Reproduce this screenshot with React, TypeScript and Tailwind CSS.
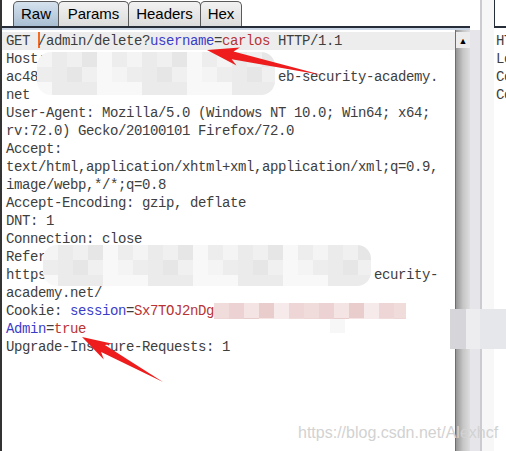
import type { ReactNode } from 'react';

const GRAYS = ['#f4f4f4', '#ebebeb', '#f0f0f0', '#e6e6e6', '#f8f8f8', '#ededed'];
const PINKS = ['#f1dcdc', '#ecd2d2', '#f4e4e4', '#e9cccc', '#f6eaea', '#eed6d6'];

interface MosaicProps {
  id: string;
  left: number;
  top: number;
  width: number;
  height: number;
  cell: number;
  palette: string[];
  radius?: number;
}

/**
 * モザイク（ぼかし）部分
 */
function Mosaic({ id, left, top, width, height, cell, palette, radius = 0 }: MosaicProps) {
  const cols = Math.ceil(width / cell);
  const rows = Math.ceil(height / cell);
  const cells: ReactNode[] = [];
  for (let r = 0; r < rows; r++) {
    for (let c = 0; c < cols; c++) {
      const shade = palette[(c * 7 + r * 5 + ((c * r) % 3)) % palette.length];
      cells.push(<rect key={`${r}-${c}`} x={c * cell} y={r * cell} width={cell} height={cell} fill={shade} />);
    }
  }
  return (
    <svg
      className="absolute pointer-events-none"
      style={{ left, top }}
      width={width}
      height={height}
      viewBox={`0 0 ${width} ${height}`}
    >
      <defs>
        <clipPath id={id}>
          <rect x={0} y={0} width={width} height={height} rx={radius} ry={radius} />
        </clipPath>
      </defs>
      <g clipPath={`url(#${id})`}>{cells}</g>
    </svg>
  );
}

const B = ({ children }: { children: ReactNode }) => <span className="text-[#3c3cc8]">{children}</span>;
const R = ({ children }: { children: ReactNode }) => <span className="text-[#b83434]">{children}</span>;

const requestLines: ReactNode[] = [
  <>
    GET <span className="inline-block w-[2px] h-[16px] -mr-[2px] bg-[#f26b22] align-[-3px]" />/admin/delete?<B>username</B>=<R>carlos</R> HTTP/1.1
  </>,
  'Host:',
  'ac48                              eb-security-academy.',
  'net',
  'User-Agent: Mozilla/5.0 (Windows NT 10.0; Win64; x64;',
  'rv:72.0) Gecko/20100101 Firefox/72.0',
  'Accept:',
  'text/html,application/xhtml+xml,application/xml;q=0.9,',
  'image/webp,*/*;q=0.8',
  'Accept-Encoding: gzip, deflate',
  'DNT: 1',
  'Connection: close',
  'Refer',
  'https                                         ecurity-',
  'academy.net/',
  <>
    Cookie: <B>session</B>=<R>Sx7TOJ2nDg</R>
  </>,
  <>
    <B>Admin</B>=<R>true</R>
  </>,
  'Upgrade-Insecure-Requests: 1',
];

const responseLines = ['HTTP/1.1 302 Found', 'Location: /admin', 'Connection: close', 'Content-Length: 0'];

const tabs = [
  { label: 'Raw', width: 'w-[46px]', active: true },
  { label: 'Params', width: 'w-[71px]', active: false },
  { label: 'Headers', width: 'w-[73px]', active: false },
  { label: 'Hex', width: 'w-[42px]', active: false },
];

export default function App() {
  return (
    <div className="relative w-[506px] h-[451px] overflow-hidden bg-white flex">
      {/* リクエスト側 */}
      <div className="w-[470px] h-full flex flex-col border-l-2 border-[#333]">
        <div className="h-[28px] flex items-end pl-[11px] border-b-2 border-[#262c38] shrink-0">
          {tabs.map((tab) => (
            <div
              key={tab.label}
              className={`${tab.width} h-[25px] -ml-px first:ml-0 flex items-center justify-center rounded-t-[5px] border border-b-0 border-[#5a5a5a] font-['Liberation_Sans',Arial,sans-serif] text-[15px] text-black ${
                tab.active
                  ? 'bg-gradient-to-b from-[#d6e2ee] to-[#a9bed3]'
                  : 'bg-gradient-to-b from-[#f2f2f2] to-[#dcdcdc]'
              }`}
            >
              {tab.label}
            </div>
          ))}
        </div>
        <div className="h-[2px] bg-[#c9d5e4] shrink-0" />
        <div className="flex-1 flex min-h-0">
          <div className="flex-1 pt-[2px] font-['Liberation_Mono','Courier_New',monospace] text-[14px] tracking-[-0.4px] text-[#3e3e3e]">
            {requestLines.map((line, i) => (
              <div
                key={i}
                className={`h-[18px] leading-[18px] pl-[4px] whitespace-pre ${i === 0 ? 'bg-[#ededed]' : ''}`}
              >
                {line}
              </div>
            ))}
          </div>
          <div className="w-[15px] flex flex-col border-l border-[#6e6e6e] bg-gradient-to-r from-[#959595] via-[#c6c6c6] to-[#dedede]">
            <div className="h-[16px] mt-[2px] flex items-center justify-center bg-[#ececec] text-[9px] leading-none text-black">
              ▲
            </div>
          </div>
        </div>
      </div>

      {/* 分割バー */}
      <div className="w-[24px] h-full flex">
        <div className="w-[10px] h-full flex flex-col">
          <div className="h-[30px] bg-white" />
          <div className="flex-1 bg-[#e6e6ea]" />
        </div>
        <div className="w-[2px] h-full bg-[#cbcbd0]" />
        <div className="flex-1 h-full bg-[#f7f7f7]" />
      </div>

      {/* レスポンス側 */}
      <div className="flex-1 h-full flex flex-col overflow-hidden">
        <div className="h-[28px] border-l border-b-2 border-[#262c38] shrink-0" />
        <div className="pt-[4px] pl-[2px] font-['Liberation_Mono','Courier_New',monospace] text-[14px] tracking-[-0.4px] text-[#3e3e3e]">
          {responseLines.map((line) => (
            <div key={line} className="h-[18px] leading-[18px] whitespace-pre">
              {line}
            </div>
          ))}
        </div>
      </div>

      {/* スクロールつまみ */}
      <div className="absolute left-[450px] top-[309px] w-[56px] h-[40px] flex">
        <div className="w-[16px] h-full bg-[#d6d6da]" />
        <div className="w-[14px] h-full bg-[#ededf0]" />
        <div className="flex-1 h-full bg-[#e6e7eb]" />
      </div>

      <Mosaic id="m1" left={37} top={52} width={238} height={43} cell={15} palette={GRAYS} radius={14} />
      <Mosaic id="m2" left={43} top={245} width={328} height={41} cell={15} palette={GRAYS} radius={14} />
      <Mosaic id="m3" left={214} top={303} width={192} height={16} cell={15} palette={PINKS} />
      <div className="absolute left-[330px] top-[319px] w-[15px] h-[14px] bg-[#f7f7f7]" />

      {/* 赤い矢印 */}
      <svg className="absolute left-0 top-0 pointer-events-none" width={506} height={451} viewBox="0 0 506 451">
        <polygon points="207,50 240,47.5 233.5,51.4 322,75 231.7,59.2 236.5,65.5" fill="#ee1c1c" />
        <polygon points="82,337 112.6,343.7 104.9,345.1 163,382 101.1,352.1 103.8,359.5" fill="#ee1c1c" />
      </svg>

      <div className="absolute left-[298px] top-[423px] font-['Liberation_Sans',Arial,sans-serif] text-[16px] leading-[20px] text-[#d2d2d2] pointer-events-none">
        https://blog.csdn.net/Alexhcf
      </div>
    </div>
  );
}
